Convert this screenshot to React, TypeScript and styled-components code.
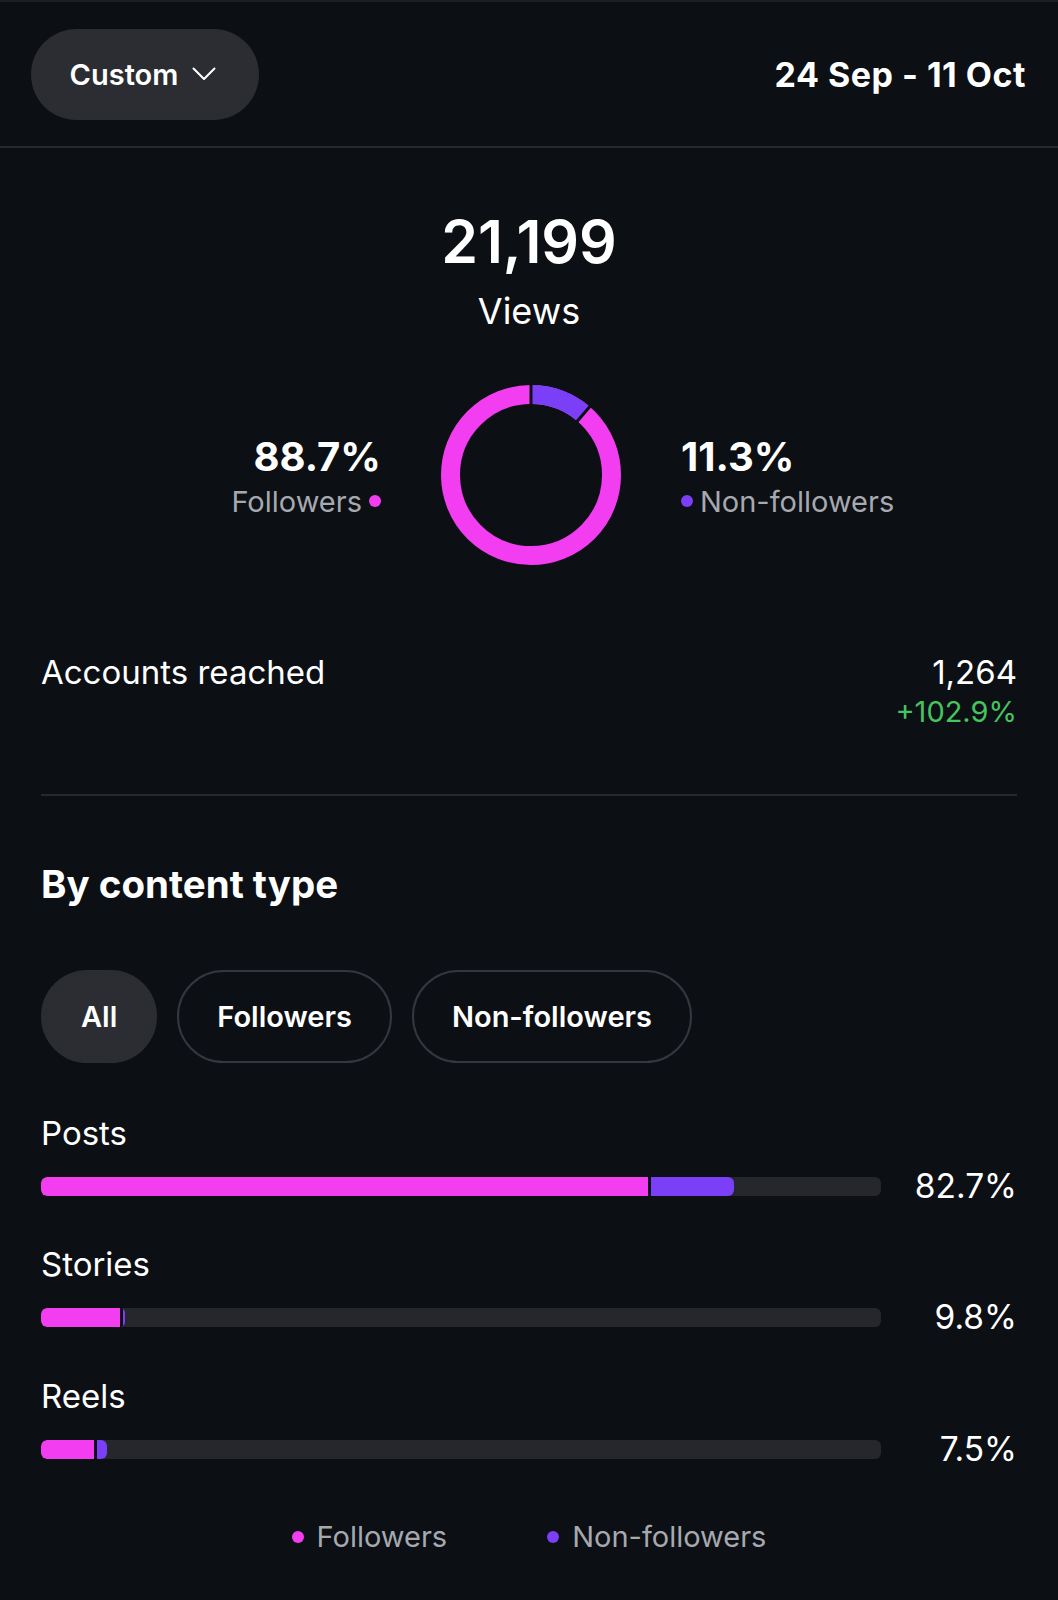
import { FC } from "react"
import styled, { createGlobalStyle } from "styled-components"

const BG = "#0c0f14"
const PINK = "#f23ef0"
const PURPLE = "#7a3ff6"

const GlobalStyle = createGlobalStyle`
  html, body {
    margin: 0;
    padding: 0;
    background: ${BG};
  }
  body {
    font-family: Inter, "Noto Sans", sans-serif;
    color: #ffffff;
  }
`

type Row = { label: string; value: string; followers: number; nonFollowers: number }

const rows: Row[] = [
  { label: "Posts", value: "82.7%", followers: 72.3, nonFollowers: 9.9 },
  { label: "Stories", value: "9.8%", followers: 9.4, nonFollowers: 0.25 },
  { label: "Reels", value: "7.5%", followers: 6.3, nonFollowers: 1.2 },
]

const Chevron: FC = () => (
  <svg width="24" height="14" viewBox="0 0 24 14" fill="none">
    <polyline points="1.5,1.5 12,12 22.5,1.5" stroke="#fff" strokeWidth="2" strokeLinecap="round" strokeLinejoin="round" />
  </svg>
)

const Donut: FC = () => {
  const r = 80.5
  const c = 2 * Math.PI * r
  const share = 0.113
  const angle = share * 360
  const rad = ((angle - 90) * Math.PI) / 180
  return (
    <svg width="180" height="180" viewBox="0 0 180 180">
      <circle cx="90" cy="90" r={r} fill="none" stroke={PINK} strokeWidth="19" />
      <circle
        cx="90"
        cy="90"
        r={r}
        fill="none"
        stroke={PURPLE}
        strokeWidth="19"
        strokeDasharray={`${c * share} ${c}`}
        transform="rotate(-90 90 90)"
      />
      <line x1="90" y1="0" x2="90" y2="22" stroke={BG} strokeWidth="3" />
      <line
        x1={90 + 68 * Math.cos(rad)}
        y1={90 + 68 * Math.sin(rad)}
        x2={90 + 92 * Math.cos(rad)}
        y2={90 + 92 * Math.sin(rad)}
        stroke={BG}
        strokeWidth="3"
      />
    </svg>
  )
}

export default function App() {
  return (
    <>
      <GlobalStyle />
      <Page>
        <Header>
          <RangeButton>
            Custom
            <Chevron />
          </RangeButton>
          <DateRange>24 Sep - 11 Oct</DateRange>
        </Header>

        <Hero>
          <Total>21,199</Total>
          <TotalLabel>Views</TotalLabel>
          <DonutRow>
            <Split $align="right">
              <SplitValue>88.7%</SplitValue>
              <SplitLabel>
                Followers
                <Dot $color={PINK} />
              </SplitLabel>
            </Split>
            <Donut />
            <Split $align="left">
              <SplitValue>11.3%</SplitValue>
              <SplitLabel>
                <Dot $color={PURPLE} />
                Non-followers
              </SplitLabel>
            </Split>
          </DonutRow>
        </Hero>

        <Content>
          <StatRow>
            <StatLabel>Accounts reached</StatLabel>
            <StatValues>
              <StatValue>1,264</StatValue>
              <StatChange>+102.9%</StatChange>
            </StatValues>
          </StatRow>

          <Divider />

          <SectionTitle>By content type</SectionTitle>

          <Filters>
            <FilterPill $active>All</FilterPill>
            <FilterPill>Followers</FilterPill>
            <FilterPill>Non-followers</FilterPill>
          </Filters>

          <Bars>
            {rows.map((row) => (
              <BarBlock key={row.label}>
                <BarLabel>{row.label}</BarLabel>
                <BarLine>
                  <Track>
                    <FollowerFill style={{ width: `${row.followers}%` }} />
                    <NonFollowerFill style={{ width: `${row.nonFollowers}%` }} />
                  </Track>
                  <BarValue>{row.value}</BarValue>
                </BarLine>
              </BarBlock>
            ))}
          </Bars>

          <Legend>
            <LegendItem>
              <Dot $color={PINK} />
              Followers
            </LegendItem>
            <LegendItem>
              <Dot $color={PURPLE} />
              Non-followers
            </LegendItem>
          </Legend>
        </Content>
      </Page>
    </>
  )
}

const Page = styled.div`
  min-height: 1600px;
  background: ${BG};
  border-top: 2px solid #1b1e23;
  box-sizing: border-box;
`

const Header = styled.header`
  height: 146px;
  box-sizing: border-box;
  padding: 0 32px 0 31px;
  display: flex;
  align-items: center;
  justify-content: space-between;
  border-bottom: 2px solid #26292e;
`

const RangeButton = styled.button`
  height: 91px;
  width: 228px;
  border: none;
  border-radius: 46px;
  background: #2b2d32;
  color: #fff;
  font-family: Inter, sans-serif;
  font-size: 29px;
  font-weight: 600;
  display: flex;
  align-items: center;
  justify-content: center;
  gap: 14px;
  padding: 0 4px 0 0;
`

const DateRange = styled.div`
  font-size: 34px;
  font-weight: 700;
  letter-spacing: 0.5px;
`

const Hero = styled.section`
  display: flex;
  flex-direction: column;
  align-items: center;
  padding-top: 64px;
`

const Total = styled.div`
  font-size: 59px;
  font-weight: 600;
  line-height: 1;
`

const TotalLabel = styled.div`
  margin-top: 22px;
  font-size: 36px;
  line-height: 1;
`

const DonutRow = styled.div`
  margin-top: 56px;
  display: flex;
  align-items: center;
  gap: 60px;
  margin-left: 4px;
`

const Split = styled.div<{ $align: "left" | "right" }>`
  width: 230px;
  display: flex;
  flex-direction: column;
  align-items: ${(p) => (p.$align === "right" ? "flex-end" : "flex-start")};
  gap: 10px;
  margin-top: 2px;
`

const SplitValue = styled.div`
  font-size: 40px;
  font-weight: 700;
  line-height: 1;
`

const SplitLabel = styled.div`
  display: flex;
  align-items: center;
  gap: 7px;
  font-size: 29px;
  line-height: 1;
  color: #a6a9af;
`

const Dot = styled.span<{ $color: string }>`
  width: 12px;
  height: 12px;
  border-radius: 50%;
  background: ${(p) => p.$color};
  flex-shrink: 0;
`

const Content = styled.section`
  padding: 0 41px;
`

const StatRow = styled.div`
  margin-top: 91px;
  display: flex;
  justify-content: space-between;
  align-items: flex-start;
`

const StatLabel = styled.div`
  font-size: 33px;
  line-height: 1;
`

const StatValues = styled.div`
  display: flex;
  flex-direction: column;
  align-items: flex-end;
  gap: 8px;
`

const StatValue = styled.div`
  font-size: 33px;
  line-height: 1;
`

const StatChange = styled.div`
  font-size: 29px;
  line-height: 1;
  color: #45c45f;
`

const Divider = styled.hr`
  margin: 68px 0 0;
  border: none;
  height: 2px;
  background: #26292e;
`

const SectionTitle = styled.h2`
  margin: 69px 0 0;
  font-size: 38.5px;
  font-weight: 700;
  line-height: 1;
`

const Filters = styled.div`
  margin-top: 66px;
  display: flex;
  gap: 20px;
`

const FilterPill = styled.button<{ $active?: boolean }>`
  height: 93px;
  padding: 0 38px;
  border-radius: 47px;
  border: 2px solid ${(p) => (p.$active ? "#2b2d32" : "#34373d")};
  background: ${(p) => (p.$active ? "#2b2d32" : "transparent")};
  color: #fff;
  font-family: Inter, sans-serif;
  font-size: 29px;
  font-weight: 600;
`

const Bars = styled.div`
  margin-top: 54px;
  display: flex;
  flex-direction: column;
  gap: 45px;
`

const BarBlock = styled.div`
  display: flex;
  flex-direction: column;
  gap: 20px;
`

const BarLabel = styled.div`
  font-size: 33px;
  line-height: 1;
`

const BarLine = styled.div`
  display: flex;
  align-items: center;
`

const Track = styled.div`
  flex: 1;
  height: 19px;
  border-radius: 6px;
  background: #25272c;
  display: flex;
  overflow: hidden;
`

const FollowerFill = styled.div`
  height: 100%;
  background: ${PINK};
  border-radius: 6px 0 0 6px;
`

const NonFollowerFill = styled.div`
  height: 100%;
  background: ${PURPLE};
  border-left: 3px solid ${BG};
  border-radius: 0 6px 6px 0;
  box-sizing: content-box;
`

const BarValue = styled.div`
  width: 136px;
  text-align: right;
  font-size: 33.5px;
  line-height: 1;
`

const Legend = styled.div`
  margin-top: 56px;
  display: flex;
  justify-content: center;
  gap: 100px;
`

const LegendItem = styled.div`
  display: flex;
  align-items: center;
  gap: 13px;
  font-size: 29px;
  line-height: 1;
  color: #a6a9af;
`
